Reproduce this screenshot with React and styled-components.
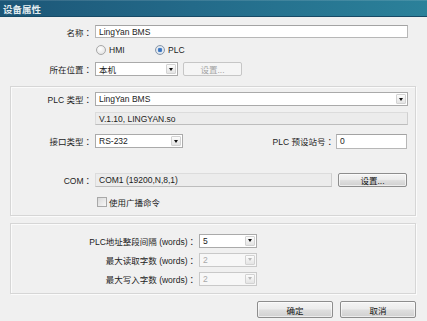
import React from 'react';
import styled, { createGlobalStyle, css } from 'styled-components';

const Global = createGlobalStyle`
  html, body { margin: 0; padding: 0; background: #f0f0f0; }
  #root { width: 427px; height: 321px; }
`;

const Window = styled.div`
  width: 427px;
  height: 321px;
  overflow: hidden;
  background: #f0f0f0;
  font-family: "Liberation Sans", "Noto Sans CJK SC", sans-serif;
  font-size: 8.5px;
  color: #1c1c1c;
  display: flex;
  flex-direction: column;
`;

const TitleBar = styled.div`
  height: 17px;
  flex: none;
  background: linear-gradient(to right, #1c5677 0%, #236a89 45%, #2b819a 100%);
  box-shadow: inset 0 1px 0 rgba(255, 255, 255, 0.12), inset 0 -1px 0 #174a66;
  color: #e3ecf0;
  font-weight: bold;
  font-size: 9.5px;
  display: flex;
  align-items: center;
  padding-left: 3px;
`;

const Body = styled.div`
  display: flex;
  flex-direction: column;
  padding: 8px 11px 0 10px;
`;

const Row = styled.div`
  display: flex;
  align-items: center;
  height: ${p => p.$h || 14}px;
  margin-top: ${p => p.$mt || 0}px;
`;

const Label = styled.div`
  width: ${p => p.$w}px;
  flex: none;
  box-sizing: border-box;
  padding-right: 3px;
  text-align: right;
  white-space: nowrap;
`;

const SideLabel = styled.div`
  margin-left: auto;
  padding-right: 2px;
  white-space: nowrap;
`;

const Colon = styled.span`
  font-family: "Noto Sans CJK JP", "Noto Sans CJK SC", sans-serif;
`;

const TextBox = styled.div`
  width: ${p => p.$w}px;
  height: ${p => p.$h || 14}px;
  box-sizing: border-box;
  flex: none;
  background: #fff;
  border: 1px solid #b7b7b7;
  border-top-color: #a3a3a3;
  padding-left: 3px;
  display: flex;
  align-items: center;
  white-space: nowrap;
`;

const ReadOnlyBox = styled.div`
  width: ${p => p.$w}px;
  height: ${p => p.$h || 14}px;
  box-sizing: border-box;
  flex: none;
  background: #ececec;
  border: 1px solid #dcdcdc;
  border-bottom-color: #bdbdbd;
  border-right-color: #cfcfcf;
  padding-left: 3px;
  display: flex;
  align-items: center;
  white-space: nowrap;
`;

const SelectBox = styled.div`
  width: ${p => p.$w}px;
  height: ${p => p.$h || 14}px;
  box-sizing: border-box;
  flex: none;
  background: #fff;
  border: 1px solid #aaaaaa;
  padding-left: 3px;
  display: flex;
  align-items: center;
  justify-content: space-between;
  white-space: nowrap;
  ${p => p.$disabled && css`
    color: #a9a9a9;
    border-color: #c9c9c9;
    background: #f7f7f7;
  `}
`;

const ArrowButton = styled.span`
  width: 10px;
  height: ${p => p.$h || 10}px;
  margin-right: 1px;
  box-sizing: border-box;
  border: 1px solid #d2d2d2;
  border-radius: 1px;
  background: linear-gradient(#fcfcfc, #e4e4e4);
  display: flex;
  align-items: center;
  justify-content: center;
  &::after {
    content: '';
    border-left: 2.5px solid transparent;
    border-right: 2.5px solid transparent;
    border-top: 3px solid ${p => (p.$disabled ? '#b9b9b9' : '#111')};
  }
`;

const PushButton = styled.button`
  width: ${p => p.$w}px;
  height: ${p => p.$h}px;
  margin-left: ${p => p.$ml || 0}px;
  flex: none;
  padding: 0;
  font: inherit;
  color: #111;
  border: 1px solid #8d8d8d;
  border-radius: 2px;
  background: linear-gradient(#f4f4f4 0%, #ececec 45%, #dedede 55%, #d0d0d0 100%);
  box-shadow: inset 0 0 0 1px rgba(255, 255, 255, 0.6);
  &:disabled {
    color: #a3a3a3;
    border-color: #c6c6c6;
    background: #f5f5f5;
    box-shadow: none;
  }
`;

const RadioGroup = styled.div`
  display: flex;
  align-items: center;
  margin-left: 86px;
`;

const RadioItem = styled.label`
  display: flex;
  align-items: center;
  width: ${p => p.$w}px;
  gap: 3px;
`;

const RadioDot = styled.span`
  width: 8px;
  height: 8px;
  border-radius: 50%;
  border: 1px solid #a8a8a8;
  background: radial-gradient(circle at 40% 35%, #ffffff, #dcdcdc);
  ${p => p.$on && css`
    border-color: #8797aa;
    background: radial-gradient(circle, #2e69b8 0, #4a82c8 2px, #e6ecf3 2.6px, #d3d9e0 100%);
  `}
`;

const CheckItem = styled.label`
  display: flex;
  align-items: center;
  gap: 2px;
  margin-left: 86px;
`;

const CheckBox = styled.span`
  width: 8px;
  height: 8px;
  border: 1px solid #a8a8a8;
  background: linear-gradient(135deg, #d9d9d9, #f7f7f7);
`;

const Group = styled.div`
  display: flex;
  flex-direction: column;
  margin-top: ${p => p.$mt}px;
  padding: ${p => p.$pt}px 8px ${p => p.$pb}px 0;
  border: 1px solid #d6d6d6;
  box-shadow: inset 1px 1px 0 #fbfbfb, 1px 1px 0 #fbfbfb;
`;

const Footer = styled.div`
  display: flex;
  justify-content: flex-end;
  gap: 7px;
  margin-top: 7px;
`;

function Select({ w, value, disabled }) {
  return (
    <SelectBox $w={w} $disabled={disabled}>
      <span>{value}</span>
      <ArrowButton $disabled={disabled} />
    </SelectBox>
  );
}

function FieldLabel({ w, children }) {
  return (
    <Label $w={w}>
      {children}
      <Colon>：</Colon>
    </Label>
  );
}

export default function App() {
  return (
    <Window>
      <Global />
      <TitleBar>设备属性</TitleBar>
      <Body>
        <Row $h={13}>
          <FieldLabel w={85}>名称</FieldLabel>
          <TextBox $w={313} $h={13}>LingYan BMS</TextBox>
        </Row>
        <Row $h={13} $mt={5}>
          <RadioGroup>
            <RadioItem $w={59}><RadioDot />HMI</RadioItem>
            <RadioItem $w={40}><RadioDot $on />PLC</RadioItem>
          </RadioGroup>
        </Row>
        <Row $mt={6}>
          <FieldLabel w={85}>所在位置</FieldLabel>
          <Select w={83} value="本机" />
          <PushButton $w={59} $h={14} $ml={5} disabled>设置...</PushButton>
        </Row>

        <Group $mt={10} $pt={5} $pb={7}>
          <Row>
            <FieldLabel w={84}>PLC 类型</FieldLabel>
            <Select w={313} value="LingYan BMS" />
          </Row>
          <Row $h={13} $mt={6}>
            <Label $w={84} />
            <ReadOnlyBox $w={313} $h={13}>V.1.10, LINGYAN.so</ReadOnlyBox>
          </Row>
          <Row $mt={9}>
            <FieldLabel w={84}>接口类型</FieldLabel>
            <Select w={88} value="RS-232" />
            <SideLabel>PLC 预设站号<Colon>：</Colon></SideLabel>
            <TextBox $w={71} $h={15}>0</TextBox>
          </Row>
          <Row $mt={25}>
            <FieldLabel w={84}>COM</FieldLabel>
            <ReadOnlyBox $w={237}>COM1 (19200,N,8,1)</ReadOnlyBox>
            <PushButton $w={69} $h={14} $ml={6}>设置...</PushButton>
          </Row>
          <Row $h={12} $mt={9}>
            <CheckItem><CheckBox />使用广播命令</CheckItem>
          </Row>
        </Group>

        <Group $mt={7} $pt={10} $pb={8}>
          <Row $h={13}>
            <FieldLabel w={188}>PLC地址整段间隔 (words)</FieldLabel>
            <Select w={58} value="5" />
          </Row>
          <Row $h={13} $mt={6}>
            <FieldLabel w={188}>最大读取字数 (words)</FieldLabel>
            <Select w={58} value="2" disabled />
          </Row>
          <Row $h={13} $mt={6}>
            <FieldLabel w={188}>最大写入字数 (words)</FieldLabel>
            <Select w={58} value="2" disabled />
          </Row>
        </Group>

        <Footer>
          <PushButton $w={76} $h={17}>确定</PushButton>
          <PushButton $w={76} $h={17}>取消</PushButton>
        </Footer>
      </Body>
    </Window>
  );
}
